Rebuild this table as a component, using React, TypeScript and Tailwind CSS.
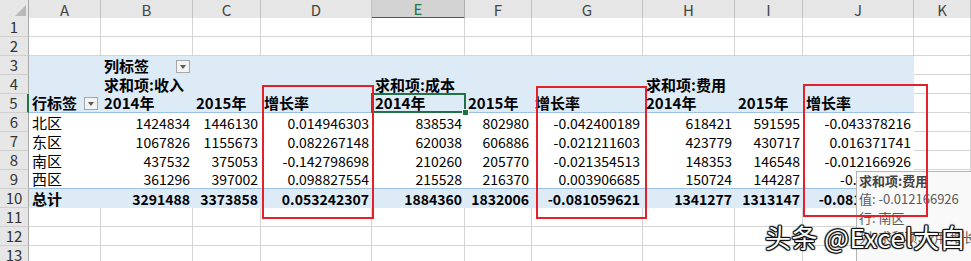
const COLS = "grid grid-cols-[29px_72px_92px_68px_111px_93px_67px_111px_92px_68px_111px_57px]";
const LETTERS = ["A", "B", "C", "D", "E", "F", "G", "H", "I", "J", "K"];

type Row = {
  zone: "plain" | "top" | "head" | "body" | "bodyLast" | "total";
  cells: (string | null)[];
};

const rows: Row[] = [
  { zone: "plain", cells: [] },
  { zone: "plain", cells: [] },
  { zone: "top", cells: [null, "列标签"] },
  { zone: "top", cells: [null, "求和项:收入", null, null, "求和项:成本", null, null, "求和项:费用"] },
  { zone: "head", cells: ["行标签", "2014年", "2015年", "增长率", "2014年", "2015年", "增长率", "2014年", "2015年", "增长率"] },
  { zone: "body", cells: ["北区", "1424834", "1446130", "0.014946303", "838534", "802980", "-0.042400189", "618421", "591595", "-0.043378216"] },
  { zone: "body", cells: ["东区", "1067826", "1155673", "0.082267148", "620038", "606886", "-0.021211603", "423779", "430717", "0.016371741"] },
  { zone: "body", cells: ["南区", "437532", "375053", "-0.142798698", "210260", "205770", "-0.021354513", "148353", "146548", "-0.012166926"] },
  { zone: "bodyLast", cells: ["西区", "361296", "397002", "0.098827554", "215528", "216370", "0.003906685", "150724", "144287", "-0.0427072"] },
  { zone: "total", cells: ["总计", "3291488", "3373858", "0.053242307", "1884360", "1832006", "-0.081059621", "1341277", "1313147", "-0.081880601"] },
  { zone: "plain", cells: [] },
  { zone: "plain", cells: [] },
  { zone: "plain", cells: [] },
];

function Dropdown() {
  return (
    <span className="w-[14px] h-[13px] mb-[2px] border border-[#a6a6a6] bg-[#f3f3f3] flex items-center justify-center shrink-0">
      <span className="w-0 h-0 border-l-[3.5px] border-r-[3.5px] border-t-[4px] border-l-transparent border-r-transparent border-t-[#595959]" />
    </span>
  );
}

function zoneClass(zone: Row["zone"]) {
  if (zone === "plain") return "bg-white border-r border-b border-[#d4d4d4]";
  if (zone === "top") return "bg-[#ddebf7]";
  if (zone === "head") return "bg-[#ddebf7] border-b border-[#9bc2e6]";
  if (zone === "body") return "bg-white";
  if (zone === "bodyLast") return "bg-white border-b border-[#9bc2e6]";
  return "bg-[#ddebf7]";
}

function DataRow({ row, index }: { row: Row; index: number }) {
  const n = index + 1;
  const selected = n === 5;
  return (
    <div className={`${COLS} h-[19px]`}>
      <div
        className={`flex items-center justify-center bg-[#e6e6e6] border-b border-[#cfcfcf] text-[15px] leading-[18px] text-[#333] ${
          selected ? "border-r-2 border-r-[#217346]" : "border-r border-r-[#a9a9a9]"
        }`}
      >
        {n}
      </div>
      {LETTERS.map((_, c) => {
        const inPivot = c < 10 && row.zone !== "plain";
        const text = row.cells[c] ?? null;
        const right = (row.zone === "body" || row.zone === "bodyLast" || row.zone === "total") && c > 0;
        const cls = inPivot ? zoneClass(row.zone) : "bg-white border-r border-b border-[#d4d4d4]";
        const bold = row.zone === "top" || row.zone === "head" || row.zone === "total";
        const cjk = /[\u4e00-\u9fff]/.test(text ?? "");
        const isE5 = selected && c === 4;
        return (
          <div
            key={c}
            className={`relative flex items-end px-[3px] whitespace-nowrap ${cls} ${right ? "justify-end" : "justify-between"}`}
          >
            {text && (
              <span
                className={`relative z-10 leading-[18px] text-black ${bold ? "font-bold" : ""} ${
                  cjk ? "text-[15px]" : "text-[14px]"
                }`}
              >
                {text}
              </span>
            )}
            {index === 2 && c === 1 && <Dropdown />}
            {index === 4 && c === 0 && <Dropdown />}
            {isE5 && (
              <>
                <span className="absolute -left-[1px] -top-[1px] -right-[1px] -bottom-[1px] z-20 border-2 border-[#217346]" />
                <span className="absolute -right-[4px] -bottom-[4px] z-20 w-[7px] h-[7px] bg-[#217346] border border-white" />
              </>
            )}
          </div>
        );
      })}
    </div>
  );
}

export default function App() {
  return (
    <div className="relative w-[971px] h-[261px] overflow-hidden bg-white font-['Noto_Sans_CJK_SC','Noto_Sans',sans-serif]">
      <div className={`${COLS} h-[18px]`}>
        <div className="flex items-end justify-end p-[2px] bg-[#e6e6e6] border-r border-b border-[#a9a9a9]">
          <svg width="11" height="11" viewBox="0 0 11 11">
            <polygon points="11,0 11,11 0,11" fill="#b9b9b9" />
          </svg>
        </div>
        {LETTERS.map((l, i) => (
          <div
            key={l}
            className={`flex items-center justify-center text-[15px] leading-[17px] border-r ${
              i === 4
                ? "bg-[#d3d3d3] text-[#217346] border-b-2 border-b-[#217346] border-r-[#b0b0b0]"
                : "bg-[#e6e6e6] text-[#444] border-b border-b-[#9a9a9a] border-r-[#c2c2c2]"
            }`}
          >
            {l}
          </div>
        ))}
      </div>
      {rows.map((r, i) => (
        <DataRow key={i} row={r} index={i} />
      ))}

      {/* hover tooltip */}
      <div className="absolute left-[856px] top-[171px] z-30 w-[140px] h-[100px] bg-[#f9f9f9] border border-[#b4b4b4] pl-[2px] text-[13px] leading-[19px] text-[#5a5a5a]">
        <div className="font-bold text-[#444] leading-[17px]">求和项:费用</div>
        <div>值: -0.012166926</div>
        <div>行: 南区</div>
        <div>列: 求和项:费用 增长率</div>
      </div>

      {/* red highlight boxes */}
      <div className="absolute left-[262px] top-[85px] z-40 w-[112px] h-[134px] border-2 border-[#e3212b]" />
      <div className="absolute left-[536px] top-[86px] z-40 w-[111px] h-[133px] border-2 border-[#e3212b]" />
      <div className="absolute left-[803px] top-[84px] z-40 w-[125px] h-[133px] border-2 border-[#e3212b]" />

      {/* watermark */}
      <div className="absolute left-[765px] top-[219px] z-50 text-[26px] leading-[36px] tracking-[0.5px] text-white whitespace-nowrap [text-shadow:1px_1px_1px_#111,-1px_-1px_1px_#111,1px_-1px_1px_#111,-1px_1px_1px_#111,0_1px_0_#111,1px_0_0_#111,0_-1px_0_#111,-1px_0_0_#111]">
        头条 @Excel大白
      </div>
    </div>
  );
}
